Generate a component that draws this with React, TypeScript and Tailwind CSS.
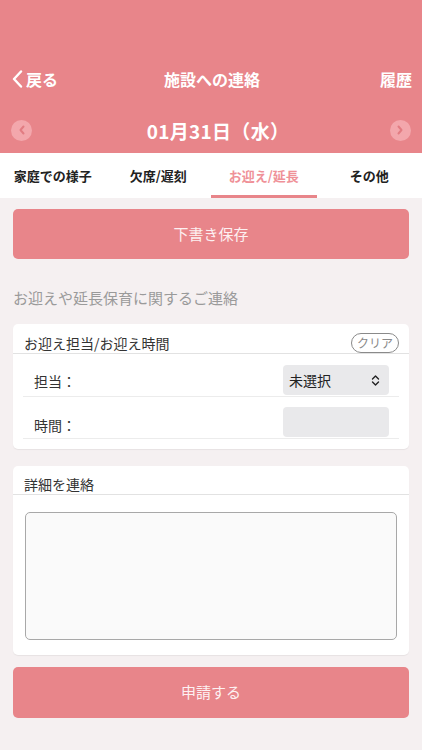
import React from 'react';

const tabs = ['家庭での様子', '欠席/遅刻', 'お迎え/延長', 'その他'];

function CircleArrow({ dir }: { dir: 'left' | 'right' }) {
  return (
    <div className="flex h-[21px] w-[21px] items-center justify-center rounded-full bg-[#F3A7AC]">
      <svg width="8" height="10" viewBox="0 0 8 10" fill="none">
        <path
          d={dir === 'left' ? 'M5.5 1.5 L2.5 5 L5.5 8.5' : 'M2.5 1.5 L5.5 5 L2.5 8.5'}
          stroke="#E27C82"
          strokeWidth="2"
          strokeLinecap="round"
          strokeLinejoin="round"
        />
      </svg>
    </div>
  );
}

export default function App() {
  return (
    <div
      className="flex min-h-[750px] w-[422px] flex-col bg-[#F5F0F1]"
      style={{ fontFamily: '"Noto Sans CJK JP", "Noto Sans", sans-serif' }}
    >
      {/* Header */}
      <div className="flex h-[153px] flex-col bg-[#E8858A] text-white">
        <div className="mt-[60px] grid h-[38px] grid-cols-[1fr_auto_1fr] items-center pl-[12px] pr-[10px]">
          <div className="flex items-center gap-[3px]">
            <svg width="11" height="18" viewBox="0 0 11 18" fill="none">
              <path d="M9 1.5 L2 9 L9 16.5" stroke="white" strokeWidth="2.4" strokeLinecap="round" strokeLinejoin="round" />
            </svg>
            <span className="text-[16px] font-bold leading-none">戻る</span>
          </div>
          <span className="text-[16px] font-bold leading-none">施設への連絡</span>
          <span className="justify-self-end text-[16px] font-bold leading-none">履歴</span>
        </div>
        <div className="mt-[9px] flex h-[46px] items-center justify-between px-[11px]">
          <CircleArrow dir="left" />
          <span className="ml-[14px] text-[19px] font-bold leading-none tracking-[0.3px]">01月31日（水）</span>
          <CircleArrow dir="right" />
        </div>
      </div>

      {/* Tabs */}
      <div className="grid h-[45px] grid-cols-4 bg-white">
        {tabs.map((t, i) => (
          <div
            key={t}
            className={
              i === 2
                ? 'flex items-center justify-center border-b-[3px] border-[#E8858A] pt-[3px] text-[13px] font-bold text-[#EF9198]'
                : 'flex items-center justify-center border-b-[3px] border-transparent pt-[3px] text-[13px] font-bold text-[#222]'
            }
          >
            {t}
          </div>
        ))}
      </div>

      <div className="flex flex-col px-[13px] pt-[11px]">
        <button className="flex h-[50px] items-center justify-center rounded-[5px] bg-[#E8858A] text-[15px] text-[#FDF0F1]">
          下書き保存
        </button>

        <p className="mt-[29px] text-[15px] leading-[20px] text-[#9A9A9A]">お迎えや延長保育に関するご連絡</p>

        {/* Card 1 */}
        <div className="mt-[16px] rounded-[5px] bg-white pb-[10px] shadow-[0_1px_1px_rgba(0,0,0,0.06)]">
          <div className="flex items-end justify-between border-b border-[#E2E2E2] pl-[11px] pr-[10px] pt-[9px]">
            <span className="text-[14px] leading-[20px] text-[#333]">お迎え担当/お迎え時間</span>
            <span className="flex h-[20px] items-center rounded-full border border-[#8A8A8A] px-[5px] text-[12px] leading-none text-[#8A8A8A]">
              クリア
            </span>
          </div>
          <div className="mx-[10px]">
            <div className="flex h-[43px] items-end justify-between border-b border-[#ECECEC] pb-px pl-[11px] pr-[10px]">
              <span className="mb-[3px] text-[14px] text-[#333]">担当：</span>
              <div className="flex h-[30px] w-[106px] items-center justify-between rounded-[4px] bg-[#E9E9EB] pl-[6px] pr-[9px]">
                <span className="text-[14px] text-[#222]">未選択</span>
                <svg width="9" height="13" viewBox="0 0 9 13" fill="none">
                  <path d="M1.5 5 L4.5 2 L7.5 5 M1.5 8 L4.5 11 L7.5 8" stroke="#222" strokeWidth="1.4" strokeLinecap="round" strokeLinejoin="round" />
                </svg>
              </div>
            </div>
            <div className="flex h-[42px] items-end justify-between border-b border-[#ECECEC] pb-px pl-[11px] pr-[10px]">
              <span className="mb-[1px] text-[14px] text-[#333]">時間：</span>
              <div className="h-[30px] w-[106px] rounded-[4px] bg-[#E9E9EB]" />
            </div>
          </div>
        </div>

        {/* Card 2 */}
        <div className="mt-[17px] rounded-[5px] bg-white pb-[15px] shadow-[0_1px_1px_rgba(0,0,0,0.06)]">
          <div className="border-b border-[#E2E2E2] pl-[11px] pt-[8px] text-[14px] leading-[20px] text-[#333]">
            詳細を連絡
          </div>
          <div className="mx-[12px] mt-[17px]">
            <textarea className="block h-[128px] w-full resize-none rounded-[5px] border border-[#A8A8A8] bg-[#FAFAFA] outline-none" />
          </div>
        </div>

        <button className="mt-[12px] flex h-[51px] items-center justify-center rounded-[5px] bg-[#E8858A] text-[15px] text-[#FDF0F1]">
          申請する
        </button>
      </div>
    </div>
  );
}
